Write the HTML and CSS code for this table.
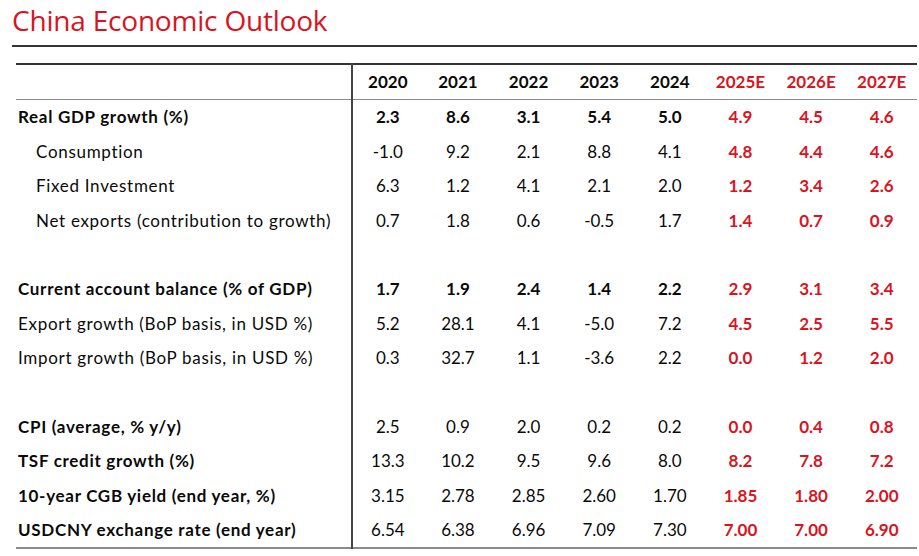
FILE: index.html
```html
<!DOCTYPE html>
<html>
<head>
<meta charset="utf-8">
<link rel="stylesheet" href="styles.css">
</head>
<body>
<div class="page">
  <h1 class="title">China Economic Outlook</h1>
  <div class="rule"></div>
  <table class="outlook">
    <thead>
      <tr>
        <th class="label"></th>
        <th>2020</th><th>2021</th><th>2022</th><th>2023</th><th>2024</th>
        <th class="est">2025E</th><th class="est">2026E</th><th class="est">2027E</th>
      </tr>
    </thead>
    <tbody>
      <tr class="strong">
        <td class="label">Real GDP growth (%)</td>
        <td>2.3</td><td>8.6</td><td>3.1</td><td>5.4</td><td>5.0</td>
        <td class="est">4.9</td><td class="est">4.5</td><td class="est">4.6</td>
      </tr>
      <tr>
        <td class="label sub">Consumption</td>
        <td>-1.0</td><td>9.2</td><td>2.1</td><td>8.8</td><td>4.1</td>
        <td class="est">4.8</td><td class="est">4.4</td><td class="est">4.6</td>
      </tr>
      <tr>
        <td class="label sub">Fixed Investment</td>
        <td>6.3</td><td>1.2</td><td>4.1</td><td>2.1</td><td>2.0</td>
        <td class="est">1.2</td><td class="est">3.4</td><td class="est">2.6</td>
      </tr>
      <tr>
        <td class="label sub">Net exports (contribution to growth)</td>
        <td>0.7</td><td>1.8</td><td>0.6</td><td>-0.5</td><td>1.7</td>
        <td class="est">1.4</td><td class="est">0.7</td><td class="est">0.9</td>
      </tr>
      <tr class="spacer"><td class="label"></td><td colspan="8"></td></tr>
      <tr class="strong">
        <td class="label">Current account balance (% of GDP)</td>
        <td>1.7</td><td>1.9</td><td>2.4</td><td>1.4</td><td>2.2</td>
        <td class="est">2.9</td><td class="est">3.1</td><td class="est">3.4</td>
      </tr>
      <tr>
        <td class="label">Export growth (BoP basis, in USD %)</td>
        <td>5.2</td><td>28.1</td><td>4.1</td><td>-5.0</td><td>7.2</td>
        <td class="est">4.5</td><td class="est">2.5</td><td class="est">5.5</td>
      </tr>
      <tr>
        <td class="label">Import growth (BoP basis, in USD %)</td>
        <td>0.3</td><td>32.7</td><td>1.1</td><td>-3.6</td><td>2.2</td>
        <td class="est">0.0</td><td class="est">1.2</td><td class="est">2.0</td>
      </tr>
      <tr class="spacer"><td class="label"></td><td colspan="8"></td></tr>
      <tr>
        <td class="label bold">CPI (average, % y/y)</td>
        <td>2.5</td><td>0.9</td><td>2.0</td><td>0.2</td><td>0.2</td>
        <td class="est">0.0</td><td class="est">0.4</td><td class="est">0.8</td>
      </tr>
      <tr>
        <td class="label bold">TSF credit growth (%)</td>
        <td>13.3</td><td>10.2</td><td>9.5</td><td>9.6</td><td>8.0</td>
        <td class="est">8.2</td><td class="est">7.8</td><td class="est">7.2</td>
      </tr>
      <tr>
        <td class="label bold">10-year CGB yield (end year, %)</td>
        <td>3.15</td><td>2.78</td><td>2.85</td><td>2.60</td><td>1.70</td>
        <td class="est">1.85</td><td class="est">1.80</td><td class="est">2.00</td>
      </tr>
      <tr>
        <td class="label bold">USDCNY exchange rate (end year)</td>
        <td>6.54</td><td>6.38</td><td>6.96</td><td>7.09</td><td>7.30</td>
        <td class="est">7.00</td><td class="est">7.00</td><td class="est">6.90</td>
      </tr>
    </tbody>
  </table>
</div>
</body>
</html>
```

FILE: styles.css
```css
html, body {
  margin: 0;
  padding: 0;
  background: #ffffff;
}

.page {
  width: 919px;
  height: 556px;
  overflow: hidden;
}

.title {
  margin: 0;
  padding: 0 0 0 12px;
  height: 45px;
  font-family: "Open Sans", "Noto Sans", sans-serif;
  font-weight: 400;
  font-size: 28px;
  line-height: 40px;
  color: #d9141e;
  letter-spacing: -0.2px;
}

.rule {
  margin: 0 2px 0 12px;
  height: 2px;
  background: #333333;
}

.outlook {
  margin: 16px 2px 0 16px;
  width: 901px;
  border-collapse: collapse;
  table-layout: fixed;
  font-family: Lato, "Open Sans", sans-serif;
  font-size: 17px;
  color: #0a0a0a;
  border-top: 2px solid #333333;
  border-bottom: 2px solid #8a8a8a;
}

.outlook th,
.outlook td {
  padding: 0 0 0.5px 0;
  height: 33.9px;
  text-align: center;
  vertical-align: middle;
  white-space: nowrap;
}

.outlook th {
  font-weight: 700;
  height: 33.5px;
  border-bottom: 1px solid #8a8a8a;
}

.outlook .label {
  width: 333px;
  text-align: left;
  padding-left: 2px;
  letter-spacing: 0.7px;
  border-right: 2px solid #444444;
}

.outlook .sub {
  padding-left: 20px;
}

.outlook .bold,
.outlook .strong td {
  font-weight: 700;
}

.outlook .est {
  color: #d9141e;
  font-weight: 700;
}
```
